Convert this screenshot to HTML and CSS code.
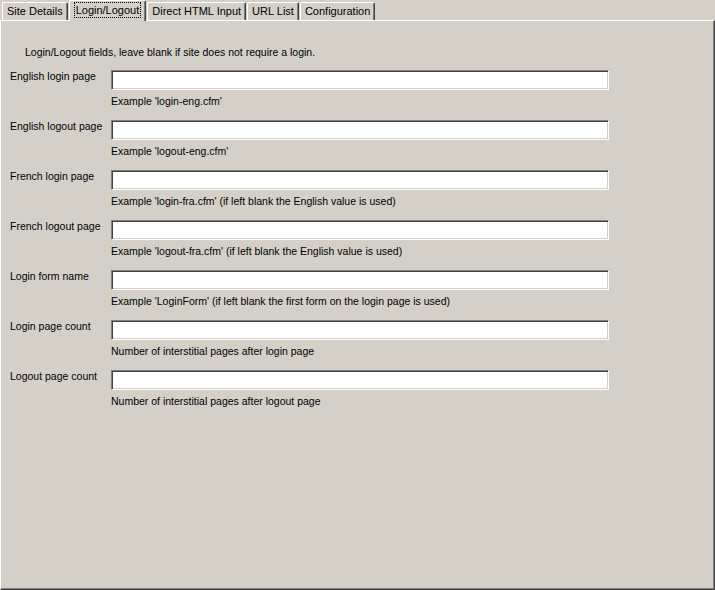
FILE: index.html
```html
<!DOCTYPE html>
<html>
<head>
<meta charset="utf-8">
<link rel="stylesheet" href="styles.css">
</head>
<body>
<div class="window">
  <div class="tabs">
    <div class="tab">Site Details</div>
    <div class="tab selected"><span class="focus">Login/Logout</span></div>
    <div class="tab">Direct HTML Input</div>
    <div class="tab">URL List</div>
    <div class="tab">Configuration</div>
  </div>
  <div class="panel">
    <p class="intro">Login/Logout fields, leave blank if site does not require a login.</p>
    <div class="row">
      <label class="label">English login page</label>
      <div class="field"><div class="input"></div><div class="hint">Example 'login-eng.cfm'</div></div>
    </div>
    <div class="row">
      <label class="label">English logout page</label>
      <div class="field"><div class="input"></div><div class="hint">Example 'logout-eng.cfm'</div></div>
    </div>
    <div class="row">
      <label class="label">French login page</label>
      <div class="field"><div class="input"></div><div class="hint">Example 'login-fra.cfm' (if left blank the English value is used)</div></div>
    </div>
    <div class="row">
      <label class="label">French logout page</label>
      <div class="field"><div class="input"></div><div class="hint">Example 'logout-fra.cfm' (if left blank the English value is used)</div></div>
    </div>
    <div class="row">
      <label class="label">Login form name</label>
      <div class="field"><div class="input"></div><div class="hint">Example 'LoginForm' (if left blank the first form on the login page is used)</div></div>
    </div>
    <div class="row">
      <label class="label">Login page count</label>
      <div class="field"><div class="input"></div><div class="hint">Number of interstitial pages after login page</div></div>
    </div>
    <div class="row">
      <label class="label">Logout page count</label>
      <div class="field"><div class="input"></div><div class="hint">Number of interstitial pages after logout page</div></div>
    </div>
  </div>
</div>
</body>
</html>
```
FILE: styles.css
```css
html, body {
  margin: 0;
  padding: 0;
  background: #d4d0c8;
}
body {
  font-family: "Liberation Sans", Arial, sans-serif;
  font-size: 10.5px;
  color: #000;
}
.window {
  width: 715px;
  height: 590px;
  display: flex;
  flex-direction: column;
}
.tabs {
  display: flex;
  align-items: flex-end;
  height: 20px;
  padding-left: 2px;
  flex: none;
  font-size: 11px;
}
.tab {
  height: 17px;
  line-height: 17px;
  padding: 0 4px;
  border-top: 1px solid #fff;
  border-left: 1px solid #fff;
  border-right: 1px solid #404040;
  box-shadow: inset -1px 0 0 #808080;
  border-radius: 2px 2px 0 0;
  background: #d4d0c8;
  white-space: nowrap;
}
.tab.selected {
  height: 20px;
  line-height: 18px;
  margin: 0 0 -1px 0;
  padding: 0 5px;
  position: relative;
  z-index: 2;
  align-self: flex-start;
}
.tab + .tab { margin-left: 1px; }
.focus {
  outline: 1px dotted #000;
  outline-offset: 0;
  padding: 0 1px;
  display: inline-block;
  line-height: 14px;
}
.panel {
  flex: 1;
  border-top: 1px solid #fff;
  border-left: 1px solid #fff;
  border-right: 1px solid #404040;
  border-bottom: 1px solid #404040;
  box-shadow: inset -1px -1px 0 #808080;
  padding: 0 0 0 9px;
  position: relative;
  z-index: 1;
}
.intro {
  margin: 25px 0 0 15px;
  line-height: 13px;
}
.row {
  display: flex;
  margin-top: 11px;
}
.row + .row {
  margin-top: 12px;
}
.label {
  width: 101px;
  flex: none;
  line-height: 13px;
}
.field {
  display: flex;
  flex-direction: column;
}
.input {
  width: 496px;
  height: 18px;
  background: #fff;
  border-top: 1px solid #808080;
  border-left: 1px solid #808080;
  border-right: 1px solid #fff;
  border-bottom: 1px solid #fff;
  box-shadow: inset 1px 1px 0 #404040, inset -1px -1px 0 #d4d0c8;
}
.hint {
  margin-top: 5px;
  line-height: 13px;
}
```
